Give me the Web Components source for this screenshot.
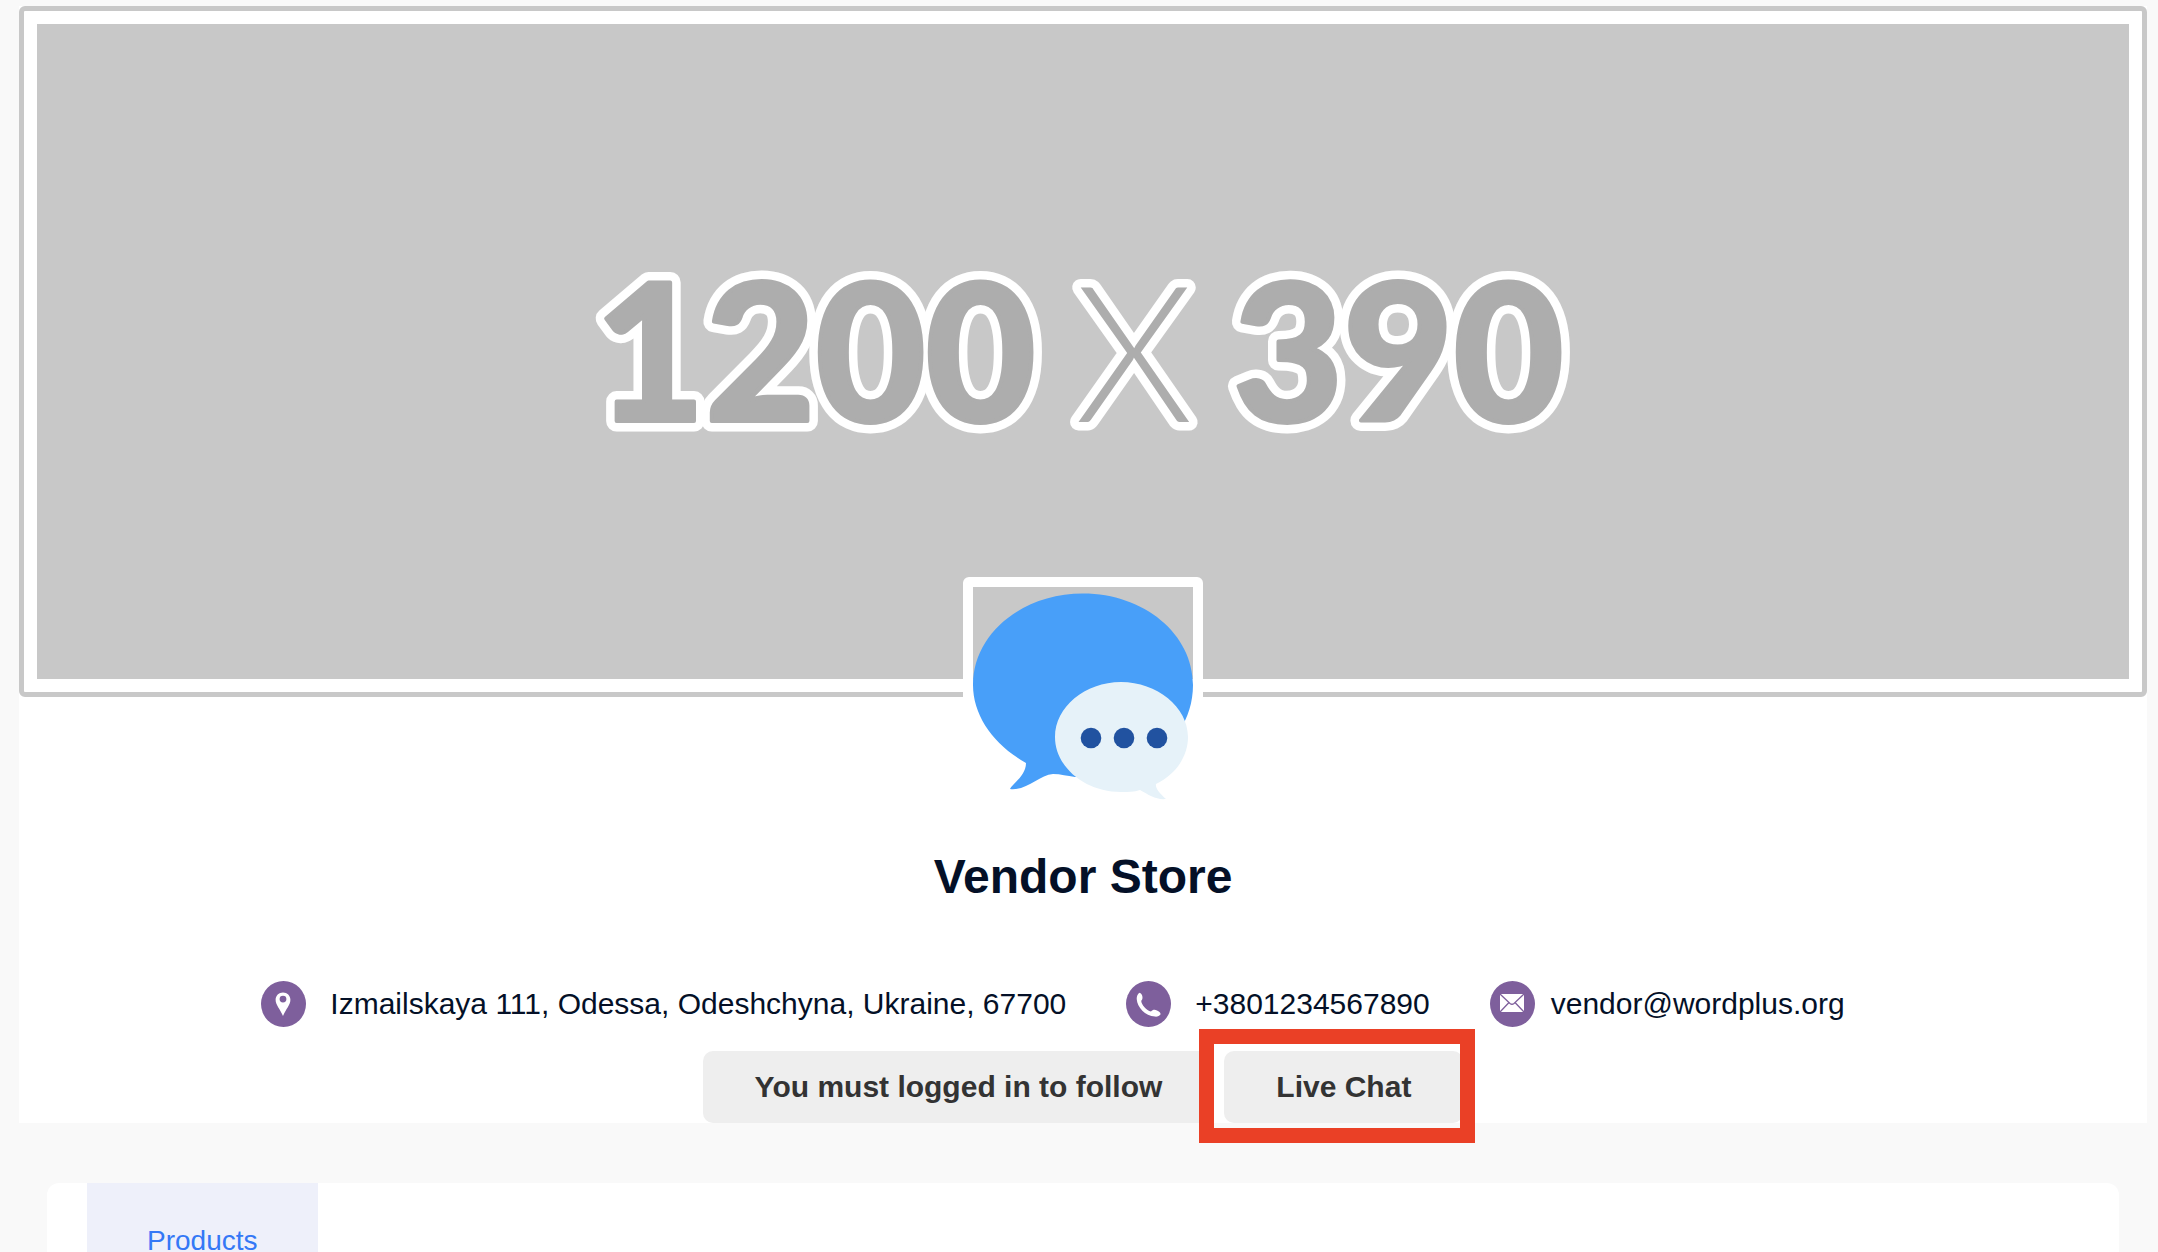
<!DOCTYPE html>
<html lang="en">
<head>
<meta charset="utf-8">
<meta name="viewport" content="width=device-width, initial-scale=1">
<title>Vendor Store</title>
<style>
body {
  margin: 0;
  background: #f9f9f9;
  color: #041027;
  font-family: "Liberation Sans", Arial, sans-serif;
}
</style>
</head>
<body>

<vendor-page>
  <store-header>
    <store-banner slot="banner"></store-banner>
    <store-avatar slot="avatar"></store-avatar>
    <span slot="name">Vendor Store</span>
    <contact-item slot="contact" icon="pin">Izmailskaya 111, Odessa, Odeshchyna, Ukraine, 67700</contact-item>
    <contact-item slot="contact" icon="phone">+3801234567890</contact-item>
    <contact-item slot="contact" icon="mail">vendor@wordplus.org</contact-item>
    <store-button slot="action">You must logged in to follow</store-button>
    <store-button slot="action" highlighted>Live Chat</store-button>
  </store-header>
  <store-tabs>
    <tab-link href="#products">Products</tab-link>
  </store-tabs>
</vendor-page>

<script>
function makeTemplate(html) {
  const template = document.createElement("template");
  template.innerHTML = html;
  return template;
}

// shared base: clones the template of the class into an open shadow root
class BaseElement extends HTMLElement {
  constructor() {
    super();
    this.attachShadow({ mode: "open" });
    this.shadowRoot.appendChild(this.constructor.template.content.cloneNode(true));
  }
}

class VendorPage extends BaseElement {
  static template = makeTemplate(`
<style>
:host {
  display: flex;
  flex-direction: column;
  gap: 60px;
  box-sizing: border-box;
  height: 100vh;
  padding: 6px 11px 0 19px;
  overflow: hidden;
}
</style>
<slot></slot>
`);
}

class StoreHeader extends BaseElement {
  static template = makeTemplate(`
<style>
:host {
  display: flex;
  flex-direction: column;
  align-items: center;
  flex: none;
  background: #fff;
}
slot[name="banner"] {
  display: block;
  width: 100%;
}
h1 {
  margin: 32px 0 76px;
  font-size: 48px;
  line-height: 56px;
  font-weight: bold;
}
.contacts {
  display: flex;
  flex-wrap: wrap;
  justify-content: center;
}
.actions {
  display: flex;
  gap: 10px;
  margin-top: 24px;
}
</style>
<slot name="banner"></slot>
<slot name="avatar"></slot>
<h1><slot name="name"></slot></h1>
<div class="contacts"><slot name="contact"></slot></div>
<div class="actions"><slot name="action"></slot></div>
`);
}

class StoreBanner extends BaseElement {
  static template = makeTemplate(`
<style>
:host {
  display: block;
  width: 100%;
  box-sizing: border-box;
  padding: 13px;
  border: 5px solid #c8c8c8;
  border-radius: 6px;
  background: #fff;
}
svg {
  display: block;
  width: 100%;
  background: #c8c8c8;
  font-family: Lato, sans-serif;
  font-weight: 900;
  font-size: 190px;
  fill: #adadad;
  stroke-linejoin: round;
}
.outline {
  stroke: #fff;
  stroke-width: 21px;
}
/* same digits again, a bit fatter, on top of the white outline */
.face {
  stroke: #adadad;
  stroke-width: 4px;
}
.times {
  stroke: #fff;
  stroke-width: 17px;
  paint-order: stroke;
  font-weight: 300;
  text-anchor: middle;
}
</style>
<svg viewBox="0 0 2092 655">
  <g class="outline">
    <g id="digits">
      <text x="558" y="397">1200</text>
      <text x="1196" y="397">390</text>
    </g>
  </g>
  <use href="#digits" class="face"/>
  <text x="1097" y="398" class="times">X</text>
</svg>
`);
}

class StoreAvatar extends BaseElement {
  static template = makeTemplate(`
<style>
:host {
  display: block;
  position: relative;
  margin-top: -120px;
  border: 10px solid #fff;
  border-radius: 6px;
}
svg {
  display: block;
  width: 220px;
  height: 220px;
}
.sky {
  fill: #c8c8c8;
}
</style>
<svg viewBox="0 0 220 220" role="img" aria-label="Store logo">
  <rect width="220" height="220" fill="#fff"/>
  <rect class="sky" width="220" height="92"/>
  <path fill="#489ff9" d="M53 176C21 158 0 129 0 98C0 47 49 6.5 110 6.5S220 47 220 98C220 146 180 184 130 189L102 190C94 189 88 187 80 187C66 188 54 204 37 202C39 197 53 189 53 176Z"/>
  <path fill="#e6f2f9" d="M183 197C182 201 187 207 193 212C183 213 176 208 167 203C161 205 155 205 148 205C112 205 82 180 82 150S112 95 148 95S215 120 215 150C215 170 202 188 183 197Z"/>
  <g fill="#2152a0">
    <circle cx="118" cy="151" r="10.3"/>
    <circle cx="151" cy="151" r="10.3"/>
    <circle cx="184" cy="151" r="10.3"/>
  </g>
</svg>
`);
}

const contactIcons = {
  pin: `<path fill="#fff" fill-rule="evenodd" d="M22 11.5C17.8 11.5 14.6 14.7 14.6 18.8C14.6 24 19 28 22 35C25 28 29.4 24 29.4 18.8C29.4 14.7 26.2 11.5 22 11.5ZM22 14.7A3.4 3.4 0 1 1 22 21.5A3.4 3.4 0 1 1 22 14.7Z"/>`,
  phone: `<path fill="#fff" d="M13.5 11.7C15 12.3 16 13.3 16.3 15C16.8 17 16.4 18.8 15.2 19.8C15.5 24 20.5 29.5 25 30.5C26.5 28.8 28.5 28.4 31 29.4C33 30.2 34.5 31.5 34.6 33.2C33.5 35 31.5 35.8 29 35.6C19 34.8 11.3 26.5 10.7 18C10.6 15 11.7 12.8 13.5 11.7Z"/>`,
  mail: `<rect x="10" y="13" width="24" height="18" fill="#fff"/><path fill="none" stroke="#7e5f9c" stroke-width="1.3" d="M10 13L20 22.5Q22 24 24 22.5L34 13M10 31L19 21.5M34 31L25 21.5"/>`
};

class ContactItem extends BaseElement {
  static template = makeTemplate(`
<style>
:host {
  display: flex;
  align-items: center;
  gap: 24px;
  margin-right: 60px;
  font-size: 30px;
  line-height: 46px;
}
:host([icon="mail"]) {
  gap: 16px;
}
svg {
  flex: none;
  width: 45px;
  height: 46px;
}
</style>
<svg viewBox="0 0 45 46" aria-hidden="true">
  <ellipse cx="22.5" cy="23" rx="22.5" ry="23" fill="#7e5f9c"/>
  <g></g>
</svg>
<span><slot></slot></span>
`);

  connectedCallback() {
    this.shadowRoot.querySelector("g").innerHTML = contactIcons[this.getAttribute("icon")];
  }
}

class StoreButton extends BaseElement {
  static template = makeTemplate(`
<style>
:host {
  display: block;
  position: relative;
}
button {
  display: block;
  margin: 0;
  padding: 18px 52px;
  border: 0;
  border-radius: 10px;
  background: #eee;
  color: #333;
  font: bold 30px/36px "Liberation Sans", Arial, sans-serif;
  cursor: pointer;
}
.frame {
  display: none;
}
/* red marker lying over the button's edges */
:host([highlighted]) .frame {
  display: block;
  position: absolute;
  inset: -22px -12px -20px -25px;
  border: 15px solid #ea4026;
  pointer-events: none;
}
</style>
<button type="button"><slot></slot></button>
<div class="frame"></div>
`);
}

class StoreTabs extends BaseElement {
  static template = makeTemplate(`
<style>
:host {
  display: block;
  flex: 1;
  min-height: 0;
  margin: 0 28px;
  padding: 0 40px;
  border-radius: 12px 12px 0 0;
  background: #fff;
}
nav {
  display: flex;
}
</style>
<nav><slot></slot></nav>
`);
}

class TabLink extends BaseElement {
  static template = makeTemplate(`
<style>
:host {
  display: block;
}
a {
  display: block;
  padding: 40px 60px;
  background: #eef0fa;
  color: #3478f6;
  font-size: 28px;
  line-height: 36px;
  text-decoration: none;
}
</style>
<a><slot></slot></a>
`);

  connectedCallback() {
    this.shadowRoot.querySelector("a").href = this.getAttribute("href");
  }
}

customElements.define("vendor-page", VendorPage);
customElements.define("store-header", StoreHeader);
customElements.define("store-banner", StoreBanner);
customElements.define("store-avatar", StoreAvatar);
customElements.define("contact-item", ContactItem);
customElements.define("store-button", StoreButton);
customElements.define("store-tabs", StoreTabs);
customElements.define("tab-link", TabLink);
</script>
</body>
</html>
